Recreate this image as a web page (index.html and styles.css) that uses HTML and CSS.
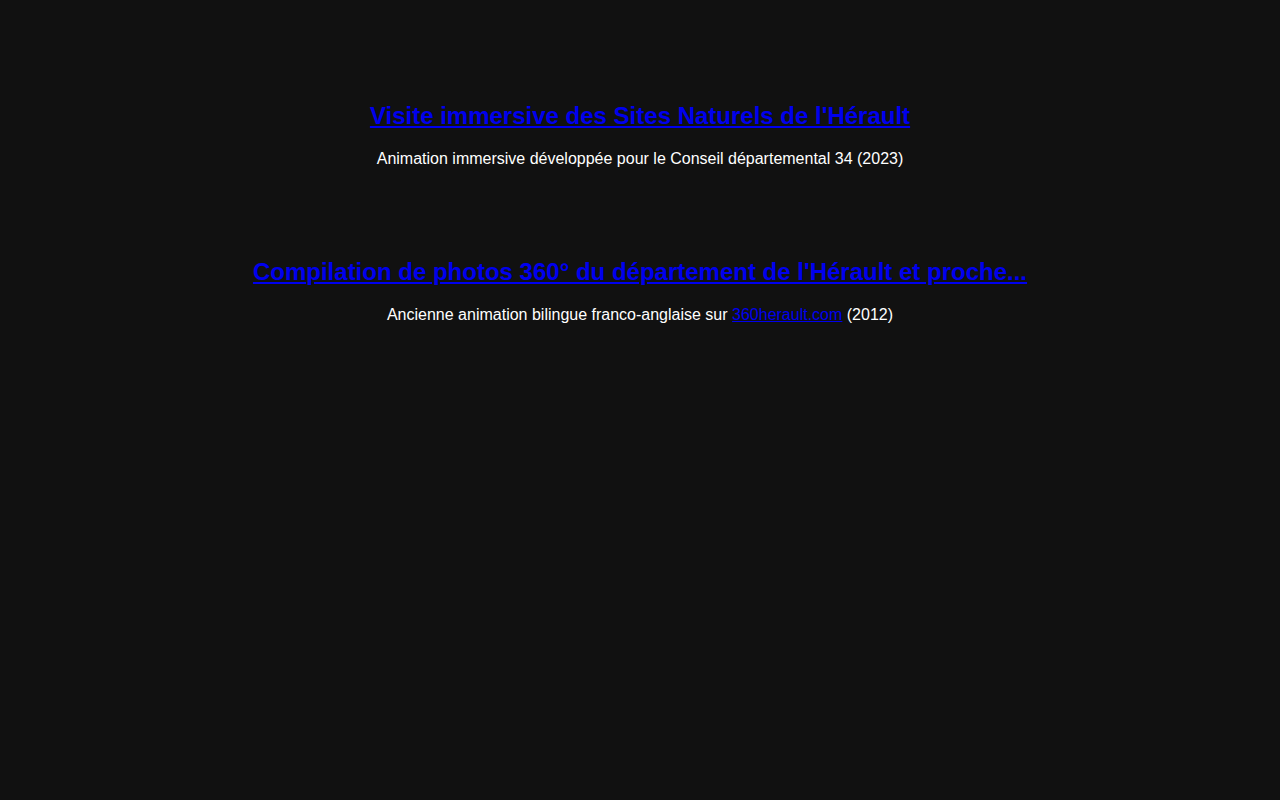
FILE: index.html
```html
<!DOCTYPE html>
<html lang="fr">
<head>
<meta charset="utf-8">
<title>Visites immersives</title>
<link rel="stylesheet" href="styles.css">
</head>
<body>
<main class="list">
  <section class="item">
    <h2 class="item-title"><a href="#">Visite immersive des Sites Naturels de l'Hérault</a></h2>
    <p class="item-desc">Animation immersive développée pour le Conseil départemental 34 (2023)</p>
  </section>
  <section class="item">
    <h2 class="item-title"><a href="#">Compilation de photos 360° du département de l'Hérault et proche...</a></h2>
    <p class="item-desc">Ancienne animation bilingue franco-anglaise sur <a href="#">360herault.com</a> (2012)</p>
  </section>
</main>
</body>
</html>
```
FILE: styles.css
```css
html, body {
  margin: 0;
  padding: 0;
  background: #111111;
}
body {
  font-family: "Liberation Sans", Arial, sans-serif;
  color: #ffffff;
  min-height: 800px;
}
.list {
  display: flex;
  flex-direction: column;
  gap: 90px;
  padding-top: 102px;
  text-align: center;
}
.item-title {
  margin: 0 0 20px;
  font-size: 24px;
  font-weight: bold;
}
.item a {
  color: #0000ee;
  text-decoration: underline;
}
.item-desc {
  margin: 0;
  font-size: 16px;
}
```
